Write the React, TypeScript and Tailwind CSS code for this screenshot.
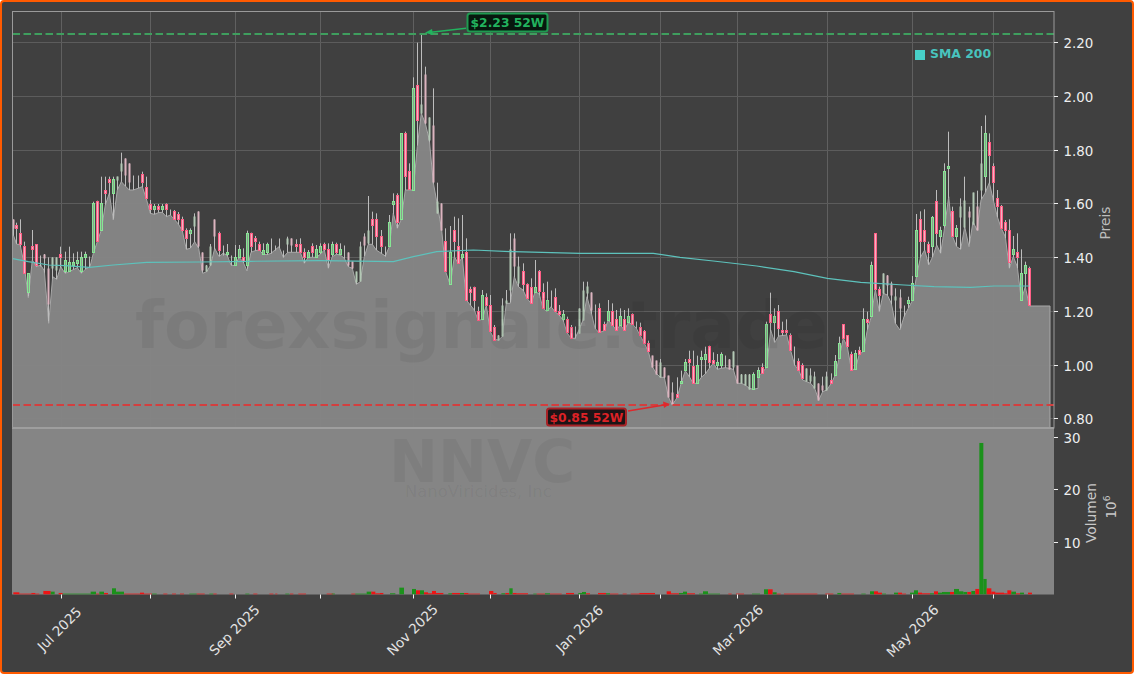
type Row = [number, string, number, number, number?]
type Bar = [number, number, number, 'g' | 'r']

// readings are taken in crop coordinates (3x), offset back to page pixels below
const leftRows: Row[] = [
  [40,'R',658,685],[48,'r',677,685,668],[60,'r',700,733,658],[72,'r',740,820,725],[85,'g',820,878],[97,'r',740,748,690],[109,'r',733,795],[121,'w',765,800],[133,'R',762,775],[146,'R',805,912,772],
  [158,'G',772,806],[170,'G',772,810],[182,'r',762,772,740],[195,'g',782,815,755],[207,'g',786,815,740],[219,'g',787,795,760],[232,'g',782,790,755],[244,'g',772,815,755],[256,'g',763,772,755],[268,'w',770,800],
  [280,'g',610,758,605],[292,'r',605,724,602],[304,'g',610,690,530],[316,'r',571,581,530],[328,'r',538,548,530],[340,'g',538,580,530],[352,'G',530,540],[364,'G',490,515,458],[376,'R',475,525],[388,'R',490,548],
  [400,'w',525,560],[414,'w',525,560],[427,'r',523,548,515],[439,'r',562,596,530],[451,'r',612,628,600],[463,'g',620,627,612],[475,'r',620,628,612],[487,'g',620,627,612],[499,'r',612,628,610],[511,'w',628,640],
  [523,'r',634,658,630],[535,'r',644,658,636],[547,'r',658,692,650],[559,'r',692,715,685],[571,'g',692,700,685],[584,'G',650,680,640],[596,'R',634,740],[608,'R',757,810],[620,'G',795,815],[632,'G',738,795,732],
  [644,'R',658,710],[657,'r',700,750,695],[669,'w',735,765],[681,'g',757,764,732],[693,'w',765,795],[705,'g',772,795,735],[717,'g',748,772,735],[729,'r',772,785,745],[741,'g',700,795,692],[753,'r',700,738,698],
  [765,'r',714,724,708],[777,'r',733,750,725],[789,'g',750,763,730],[801,'g',733,758,728],[813,'w',716,760],[825,'w',735,750],[837,'w',716,740],[850,'w',750,772],[863,'G',715,732,710],[875,'R',715,735],
  [889,'r',733,740,718],[901,'r',733,757,715],[913,'r',757,772,745],[925,'g',757,772,750],[937,'r',740,757,730],[949,'g',748,772,735],[961,'g',740,757,730],[973,'r',734,748,728],[985,'r',748,782,730],[997,'g',733,763,725],
  [1009,'r',733,757,728],[1021,'g',748,763,730],[1033,'w',735,775],[1045,'R',757,795],[1057,'R',785,805],[1069,'G',815,848],[1081,'G',740,845,725],[1093,'R',708,735,700],[1105,'G',690,730,588],[1117,'r',658,677,635],[1129,'r',658,710,640],
]

const midRows: Row[] = [
  [4,'r',710,740,690],[16,'w',740,770],[28,'g',667,738,645],[40,'g',603,612,580],[52,'r',586,668,580],[64,'g',400,658],[76,'r',400,530,395],[88,'r',515,568,490],[100,'g',265,570,232],[112,'r',256,362,128],
  [124,'G',312,340,100],[136,'R',222,370,200],[148,'G',352,420],[160,'R',375,548,265],[173,'G',605,640,548],[185,'R',610,690],[197,'r',725,815,685],[211,'g',757,853,678],[223,'r',690,725,650],[235,'r',740,790,655],
  [247,'g',763,772,645],[259,'r',757,902,715],[271,'r',868,877,860],[283,'r',862,902,860],[295,'r',935,960,920],[307,'g',885,958,870],[319,'r',892,916,880],[331,'r',916,995,885],[343,'r',982,1020,975],[355,'G',1005,1020],
  [367,'G',916,1010,895],[379,'G',900,910,870],[391,'G',747,870,700],[403,'R',715,800,700],[415,'G',800,850,770],[429,'r',813,853,790],[441,'r',853,895,850],[453,'r',862,910,835],[465,'g',862,877,780],[477,'r',813,875,810],
  [489,'r',877,925,850],[501,'g',900,932,845],[513,'w',870,920],[525,'r',892,935,865],[537,'r',935,943,915],[549,'g',943,958,930],[561,'r',958,998,950],[573,'r',982,1015,975],[585,'w',980,1015],[597,'G',925,1000],
  [609,'G',870,960,845],[621,'G',860,880,845],[633,'R',877,930],[645,'w',912,985],[657,'r',925,997,910],[673,'r',972,992,965],[685,'g',935,960,900],[697,'r',935,975,910],[709,'r',957,990,930],[721,'g',950,975,925],
  [733,'r',957,990,930],[745,'g',950,968,925],[757,'r',942,972,940],[769,'w',965,985],[781,'r',982,1007,968],[793,'r',995,1030,990],
]

// second crop row of the same stretch, y counted from the top of that crop
const lowRows: Row[] = [
  [805,'r',28,52,20],[817,'R',65,100],[829,'R',80,120],[841,'G',85,130,75],[853,'R',100,130],[865,'R',125,190],[877,'R',175,210,145],[892,'r',180,190,130],[904,'g',142,148,110],[916,'g',85,110,75],
  [928,'r',77,85,50],[940,'r',98,148,50],[952,'g',95,148,65],[964,'g',70,77,50],[976,'g',62,77,38],[988,'r',38,85,35],[1000,'r',78,88,55],[1012,'g',85,95,60],[1024,'g',60,95,55],[1036,'w',65,95],
  [1048,'R',75,105],[1060,'G',52,100],[1072,'R',95,148],[1084,'G',120,148],[1096,'G',120,155],[1108,'G',120,165],[1120,'g',120,165,115],[1134,'g',108,130,100],
]

const rightRows: Row[] = [
  [24,'r',1102,1120,1090],[38,'g',972,1102,965],[50,'r',943,968,878],[62,'g',950,968,925],[74,'r',935,985,915],[86,'r',992,998,965],[98,'r',992,998,958],[110,'r',1005,1052,1000],[122,'w',1040,1095],[134,'r',1085,1110,1075],
  [146,'r',1095,1135,1090],[158,'G',1105,1145],[170,'G',1125,1145,1105],[182,'G',1130,1165,1115],[194,'R',1150,1200],[206,'R',1155,1170,1130],[218,'G',1130,1170,1115],[232,'r',1142,1150,1120],[244,'g',1085,1125,1065],[256,'g',1030,1075,1010],
  [268,'r',973,1015],[280,'r',1005,1040],[292,'r',1062,1110,1055],[304,'g',1060,1108,1050],[316,'r',1052,1062,1040],[328,'g',958,1055,925],[340,'r',958,968,935],[352,'g',795,950,785],[364,'r',700,868],[376,'r',868,885,860],
  [388,'G',820,880],[400,'R',825,855],[412,'R',850,885,845],[424,'G',890,900,865],[438,'R',892,925,868],[450,'w',915,950],[463,'g',902,910,890],[476,'g',850,900,828],[488,'g',690,828,642],[500,'r',658,725,634],
  [512,'r',690,725,628],[524,'r',733,757,725],[536,'g',652,738,648],[548,'r',604,700,570],[560,'g',690,708,680],[572,'g',514,676,490],[584,'g',500,506,395],[596,'r',634,708,620],[608,'g',684,708,675],[620,'G',618,652,595],
  [632,'G',600,682,530],[645,'R',634,652,620],[657,'G',578,672],[669,'R',618,690,572],[681,'G',490,570,378],[693,'g',400,530,346],[706,'r',427,466,400],[718,'r',498,546,490],[730,'r',595,620,570],[742,'r',620,684,615],
  [754,'r',668,690,660],[766,'r',690,788,658],[778,'g',748,764,708],[790,'r',757,772,700],[802,'g',820,900,748],[814,'g',796,820,785],[826,'r',805,917,800],
]

const areaLeft = [38,700,50,733,60,733,72,790,85,893,97,780,109,800,122,795,133,812,146,970,158,830,170,838,182,800,195,820,207,815,232,803,244,820,256,808,270,800,280,760,292,725,304,690,316,615,328,580,340,660,352,570,364,545,376,558,388,570,400,570,414,565,427,560,439,596,451,640,463,643,475,638,487,637,499,650,511,645,523,658,535,672,547,692,559,748,571,745,584,725,596,745,608,820,620,815,632,795,644,745,657,770,669,760,681,765,693,795,705,797,717,772,729,785,741,813,753,757,765,752,777,750,789,762,801,764,813,760,825,750,837,740,850,772,863,757,875,757,889,757,901,757,913,790,925,772,937,772,949,772,961,763,973,750,985,805,997,770,1009,763,1021,765,1033,775,1045,800,1057,805,1069,853,1081,845,1093,770,1105,733,1117,733,1129,750]
const areaMid = [16,768,28,740,40,640,52,685,64,658,76,570,100,570,112,440,124,340,136,370,148,420,160,548,173,620,185,690,197,815,211,855,223,770,235,790,247,772,259,900,271,915,283,930,295,962,307,958,319,916,331,995,343,1018,355,1020,367,1010,379,910,391,910,403,830,415,860,429,870,441,895,453,910,465,877,477,880,489,925,501,935,513,920,525,935,537,945,549,960,561,998,573,1015,585,1015,597,990,609,960,621,890,633,935,645,985,657,998,673,992,685,960,697,975,709,990,721,975,733,990,745,968,757,972,769,985,781,1007,793,1030,805,1054,817,1100,829,1120,841,1132,853,1132,865,1190,877,1215,892,1192,904,1148,916,1112,928,1130,940,1150,952,1150,964,1132,976,1122,988,1105,1000,1090,1012,1108,1024,1105,1036,1103,1048,1105,1060,1108,1072,1150,1084,1150,1096,1155,1108,1165,1120,1168,1134,1165]
const areaRight = [12,1130,24,1118,38,1102,50,990,62,1028,74,1008,98,1005,110,1052,122,1095,134,1110,146,1140,158,1145,170,1150,182,1165,194,1200,206,1175,218,1170,232,1150,244,1125,256,1072,268,1015,280,1040,292,1108,304,1108,316,1062,328,1055,340,990,352,950,364,868,376,935,388,880,400,885,412,910,424,970,438,990,450,950,463,925,476,900,488,825,500,770,512,750,524,795,536,770,548,735,560,760,572,680,584,590,596,710,608,740,620,748,632,680,645,740,657,665,669,690,681,600,693,580,706,548,718,600,730,650,742,685,754,710,766,805,778,770,790,800,802,900,814,860,826,917]

const smaLeft = [38,776,85,785,146,795,195,797,268,802,340,795,440,787,600,786,750,784,960,782,1130,784]
const smaMid = [40,785,100,770,170,755,280,750,400,755,600,760,820,760,900,772,1000,783,1130,798]
const smaRight = [120,815,220,835,320,847,450,855,540,860,650,862,720,858,826,858]

const volLeft: Bar[] = [
  [40,58,6,'r'],[58,94,2,'r'],[94,106,4,'r'],[106,118,2,'r'],[130,152,10,'r'],[152,164,8,'g'],[176,188,4,'r'],[188,272,2,'g'],[272,288,8,'g'],[288,298,2,'r'],[298,312,8,'g'],[312,324,4,'r'],[336,348,18,'g'],[348,372,8,'g'],[372,420,2,'r'],[420,432,5,'r'],[432,456,2,'r'],[456,470,2,'g'],
  [490,502,2,'r'],[516,528,2,'r'],[540,552,2,'r'],[568,590,2,'g'],[590,614,2,'r'],[628,640,2,'g'],[640,650,2,'r'],[688,700,2,'r'],[736,748,2,'g'],[760,772,2,'r'],[808,820,2,'r'],[826,832,2,'r'],[856,868,2,'g'],[870,880,2,'r'],[895,918,2,'r'],[980,1000,2,'r'],[995,1005,2,'g'],[1054,1066,2,'r'],[1066,1100,2,'g'],[1100,1114,8,'g'],[1114,1126,8,'r'],[1126,1140,3,'r'],
]
const volMid: Bar[] = [
  [0,10,4,'r'],[30,46,3,'g'],[58,72,20,'g'],[96,108,16,'g'],[108,120,12,'r'],[120,132,12,'g'],[132,144,6,'r'],[144,156,3,'r'],[156,168,10,'r'],[168,190,4,'r'],[205,216,3,'g'],[216,240,4,'r'],[240,252,4,'g'],[252,265,4,'r'],[265,300,2,'r'],[327,340,10,'r'],[340,350,4,'r'],[364,376,3,'g'],[376,388,4,'r'],[388,398,18,'g'],[398,410,4,'r'],[410,444,3,'r'],
  [460,470,2,'g'],[470,495,2,'r'],[495,510,3,'g'],[510,545,2,'r'],[558,582,4,'r'],[595,606,4,'g'],[606,618,7,'g'],[618,630,3,'r'],[654,678,4,'r'],[678,690,3,'g'],[690,715,2,'r'],[728,740,2,'r'],[752,778,2,'r'],[778,825,4,'r'],[860,873,9,'r'],[873,897,3,'r'],[897,909,4,'g'],[909,921,8,'g'],[921,945,3,'r'],[957,969,2,'g'],[969,984,9,'g'],[984,1020,2,'g'],[1045,1055,2,'r'],[1068,1092,2,'r'],[1116,1140,2,'g'],
]
const volRight: Bar[] = [
  [30,42,15,'g'],[42,56,15,'r'],[56,68,6,'g'],[68,80,2,'r'],[90,190,2,'r'],[214,238,2,'r'],[250,262,4,'g'],[262,300,2,'r'],[322,335,2,'g'],[348,360,9,'g'],[360,372,9,'r'],[372,384,5,'r'],[384,396,2,'g'],[420,432,5,'g'],[432,444,5,'r'],[444,456,2,'r'],[468,480,5,'g'],[480,492,12,'g'],[492,504,5,'r'],[504,528,3,'r'],[528,540,3,'g'],[540,552,9,'r'],[552,564,5,'g'],[564,588,7,'g'],[588,600,7,'r'],[600,615,16,'g'],[615,628,9,'g'],[628,640,7,'g'],[640,652,7,'r'],[652,664,10,'g'],[664,676,16,'r'],[676,688,454,'g'],[688,698,46,'g'],[698,712,18,'r'],[712,724,8,'r'],[724,750,5,'r'],[750,760,3,'r'],[760,772,12,'r'],[772,786,8,'g'],[786,798,3,'r'],[798,810,5,'g'],[822,834,5,'r'],
]

const pairs = (flat: number[], ox: number) => {
  const out: [number, number][] = []
  for (let i = 0; i < flat.length; i += 2) out.push([ox + flat[i] / 3, flat[i + 1] / 3])
  return out
}

const areaLine = [...pairs(areaLeft, 0), ...pairs(areaMid, 380), ...pairs(areaRight, 754)]
const smaLine = [...pairs(smaLeft, 0), ...pairs(smaMid, 380), ...pairs(smaRight, 754)]
const pts = (list: [number, number][]) => list.map(([x, y]) => `${x.toFixed(1)},${y.toFixed(1)}`).join(' ')

function areaY(x: number) {
  for (let i = 1; i < areaLine.length; i++) {
    const [x0, y0] = areaLine[i - 1]
    const [x1, y1] = areaLine[i]
    if (x <= x1) return y0 + ((y1 - y0) * (x - x0)) / Math.max(x1 - x0, 0.01)
  }
  return 306
}

// snap to the pixel grid so bodies stay outlined instead of smearing
const snap = (v: number) => Math.round(v - 0.5) + 0.5

const place = (rows: Row[], ox: number, oy: number) =>
  rows.map(([zx, kind, top, bot, wick]) => ({
    x: snap(ox + zx / 3),
    kind,
    top: snap(oy + top / 3),
    bot: Math.max(snap(oy + bot / 3), snap(oy + top / 3) + 2),
    wick: oy + (wick ?? top) / 3,
  }))

const candles = [
  ...place(leftRows, 0, 0),
  ...place(midRows, 380, 0),
  ...place(lowRows, 380, 334),
  ...place(rightRows, 754, 0),
]

const volBars = [
  ...volLeft.map(b => ({ x0: b[0] / 3, x1: b[1] / 3, h: b[2] / 3, c: b[3] })),
  ...volMid.map(b => ({ x0: 380 + b[0] / 3, x1: 380 + b[1] / 3, h: b[2] / 3, c: b[3] })),
  ...volRight.map(b => ({ x0: 754 + b[0] / 3, x1: 754 + b[1] / 3, h: b[2] / 3, c: b[3] })),
]

const gridX = [61.5, 150.5, 235.5, 320.5, 413.5, 490.5, 579.5, 660.5, 737.5, 827.5, 912.5, 993.5]
const priceTicks = [
  { y: 42.5, label: '2.20' },
  { y: 96.5, label: '2.00' },
  { y: 150.5, label: '1.80' },
  { y: 203.5, label: '1.60' },
  { y: 257.5, label: '1.40' },
  { y: 311.5, label: '1.20' },
  { y: 365.5, label: '1.00' },
  { y: 418.5, label: '0.80' },
]
const volTicks = [
  { y: 437.5, label: '30' },
  { y: 489.5, label: '20' },
  { y: 542.5, label: '10' },
]
const dates = [
  { x: 60, y: 629.5, label: 'Jul 2025' },
  { x: 235, y: 630.5, label: 'Sep 2025' },
  { x: 413, y: 630.5, label: 'Nov 2025' },
  { x: 580, y: 629.5, label: 'Jan 2026' },
  { x: 738.5, y: 630.5, label: 'Mar 2026' },
  { x: 913, y: 631.5, label: 'May 2026' },
]

function Candle({ c }: { c: (typeof candles)[number] }) {
  const floor = Math.max(areaY(c.x), c.bot)
  if (c.kind === 'w') {
    return <line x1={c.x} x2={c.x} y1={c.top} y2={floor} stroke="#bdbdbd" strokeWidth="1" />
  }
  const pale = c.kind === 'G' || c.kind === 'R'
  return (
    <g>
      <line x1={c.x} x2={c.x} y1={c.wick} y2={floor} stroke="#bdbdbd" strokeWidth="1" />
      {pale ? (
        <rect
          x={c.x - 1}
          y={c.top}
          width="2"
          height={c.bot - c.top}
          fill={c.kind === 'G' ? '#b3c9b5' : '#dcb4bf'}
        />
      ) : (
        <rect
          x={c.x - 1}
          y={c.top}
          width="2"
          height={c.bot - c.top}
          fill={c.kind === 'g' ? '#8e9e8f' : '#efb4c3'}
          stroke={c.kind === 'g' ? '#86e794' : '#ff5f86'}
          strokeWidth="1"
        />
      )}
    </g>
  )
}

function Callout({
  x, y, w, h, text, fill, stroke, color,
}: {
  x: number; y: number; w: number; h: number; text: string; fill: string; stroke: string; color: string
}) {
  return (
    <g>
      <rect x={x} y={y} width={w} height={h} rx="2.5" fill={fill} stroke={stroke} strokeWidth="2" />
      <text
        x={x + w / 2}
        y={y + h / 2 + 4.5}
        textAnchor="middle"
        fontSize="12.3"
        fontWeight="700"
        fill={color}
      >
        {text}
      </text>
    </g>
  )
}

export default function App() {
  const areaPoints = pts([[12.5, 428], ...areaLine, [1029.5, 306], [1050, 306], [1050, 428]])
  const areaTop = pts([[12.5, 233], ...areaLine, [1029.5, 306], [1050, 306], [1050, 428]])

  return (
    <div className="w-[1134px] h-[674px] overflow-hidden rounded-[4px] border-2 border-[#ff5a00] bg-[#404040]">
      <svg
        viewBox="2 2 1130 670"
        width="1130"
        height="670"
        className="block font-['DejaVu_Sans',sans-serif]"
      >
        {/* grid */}
        {gridX.map(x => (
          <line key={x} x1={x} x2={x} y1="12" y2="428" stroke="#606060" strokeWidth="1" />
        ))}
        {priceTicks.map(t => (
          <line key={t.y} x1="12" x2="1054" y1={t.y} y2={t.y} stroke="#5c5c5c" strokeWidth="1" />
        ))}

        {/* price area + volume panel */}
        <polygon points={areaPoints} fill="#858585" fillOpacity="0.97" />
        <polyline points={areaTop} fill="none" stroke="#a8a8a8" strokeWidth="1" />
        <rect x="12" y="428" width="1042" height="166.5" fill="#858585" />
        <line x1="12" x2="1054" y1="428" y2="428" stroke="#a2a2a2" strokeWidth="2" />

        {candles.map((c, i) => (
          <Candle key={i} c={c} />
        ))}

        <polyline points={pts(smaLine)} fill="none" stroke="#5dc2bc" strokeWidth="1.2" />

        {/* 52 week lines */}
        <line x1="12.5" x2="1054" y1="34" y2="34" stroke="#3f9e5e" strokeWidth="2" strokeDasharray="7.5 3.5" />
        <line x1="12.5" x2="1054" y1="405" y2="405" stroke="#d33f3f" strokeWidth="1.8" strokeDasharray="7.5 3.5" />

        {/* watermark */}
        <text x="135" y="348" fontSize="66.5" fontWeight="700" fill="#000000" fillOpacity="0.055">
          forexsignale.trade
        </text>
        <text x="389" y="482" fontSize="58.5" fontWeight="700" fill="#000000" fillOpacity="0.05">
          NNVC
        </text>
        <text x="405" y="497" fontSize="16.4" fill="#000000" fillOpacity="0.05">
          NanoViricides, Inc
        </text>

        {volBars.map((b, i) => (
          <rect
            key={i}
            x={b.x0}
            y={594.3 - b.h}
            width={b.x1 - b.x0}
            height={b.h}
            fill={b.c === 'g' ? '#1b911b' : '#ee1414'}
          />
        ))}

        {/* frame */}
        <rect x="12.5" y="11.5" width="1041.5" height="416.5" fill="none" stroke="#9a9a9a" strokeWidth="1" />

        {/* axes */}
        {gridX.map(x => (
          <line key={x} x1={x} x2={x} y1="594.5" y2="598.5" stroke="#f0f0f0" strokeWidth="1" />
        ))}
        {[...priceTicks, ...volTicks].map(t => (
          <g key={t.label + t.y}>
            <line x1="1054" x2="1058" y1={t.y} y2={t.y} stroke="#f0f0f0" strokeWidth="1" />
            <text x="1063.5" y={t.y + 5.5} fontSize="13.4" fill="#eeeeee">
              {t.label}
            </text>
          </g>
        ))}
        {dates.map(d => (
          <text
            key={d.label}
            x={d.x}
            y={d.y}
            fontSize="13.6"
            fill="#e4e4e4"
            textAnchor="middle"
            dominantBaseline="middle"
            transform={`rotate(-45 ${d.x} ${d.y})`}
          >
            {d.label}
          </text>
        ))}
        <text x="1106" y="223" fontSize="13.8" fill="#bdbdbd" textAnchor="middle" dominantBaseline="middle" transform="rotate(-90 1106 223)">
          Preis
        </text>
        <text x="1092" y="513" fontSize="13.8" fill="#c8c8c8" textAnchor="middle" dominantBaseline="middle" transform="rotate(-90 1092 513)">
          Volumen
        </text>
        <g transform="rotate(-90 1112 507)">
          <text x="1112" y="507" fontSize="13.5" fill="#c8c8c8" textAnchor="middle" dominantBaseline="middle">
            10<tspan fontSize="9" dy="-5">6</tspan>
          </text>
        </g>

        {/* legend */}
        <rect x="915" y="50" width="10" height="10" fill="#48cfc8" />
        <text x="930" y="58" fontSize="12.4" fontWeight="700" fill="#48c4be">
          SMA 200
        </text>

        {/* callouts */}
        <line x1="466" y1="28.3" x2="431" y2="32.2" stroke="#22b35e" strokeWidth="1.6" />
        <polygon points="425,32.8 432,29 433,35" fill="#22b35e" />
        <Callout x={467.5} y={13.5} w={80} h={18} text="$2.23 52W" fill="#07180e" stroke="#1f9a50" color="#22b35e" />

        <line x1="628" y1="411" x2="664" y2="405" stroke="#e0282c" strokeWidth="1.6" />
        <polygon points="670,404 663,401.5 664,408" fill="#e0282c" />
        <Callout x={547} y={408.5} w={79} h={17} text="$0.85 52W" fill="#1c1416" stroke="#a82226" color="#dc2226" />
      </svg>
    </div>
  )
}
